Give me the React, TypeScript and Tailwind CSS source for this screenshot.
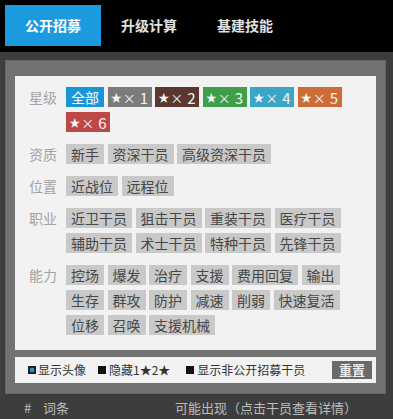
import React from "react";

const font = { fontFamily: '"Noto Sans CJK SC", "Noto Sans", sans-serif' };

const stars = [
  { n: 1, bg: "bg-[#7b7b7b]" },
  { n: 2, bg: "bg-[#5a3830]" },
  { n: 3, bg: "bg-[#3f9e4a]" },
  { n: 4, bg: "bg-[#3aa6c6]" },
  { n: 5, bg: "bg-[#cc6d38]" },
  { n: 6, bg: "bg-[#bd4846]" },
];

const groups = [
  { label: "资质", tags: ["新手", "资深干员", "高级资深干员"] },
  { label: "位置", tags: ["近战位", "远程位"] },
  { label: "职业", tags: ["近卫干员", "狙击干员", "重装干员", "医疗干员", "辅助干员", "术士干员", "特种干员", "先锋干员"] },
  {
    label: "能力",
    tags: ["控场", "爆发", "治疗", "支援", "费用回复", "输出", "生存", "群攻", "防护", "减速", "削弱", "快速复活", "位移", "召唤", "支援机械"],
  },
];

function Tag({ text }: { text: string }) {
  return (
    <div className="h-[20px] px-[5px] bg-[#c9c9c9] text-[#474747] text-[14px] leading-[20px] whitespace-nowrap">
      {text}
    </div>
  );
}

function Row({ label, children }: { label: string; children: React.ReactNode }) {
  return (
    <div className="flex">
      <div className="w-[37px] shrink-0 h-[20px] leading-[20px] text-[14px] text-[#a3a3a3]">{label}</div>
      <div className="flex flex-wrap gap-x-[3.5px] gap-y-[5px] flex-1">{children}</div>
    </div>
  );
}

function Check({ on }: { on?: boolean }) {
  return on ? (
    <span className="inline-block w-[8px] h-[8px] bg-[#3a8fb8] border-[2px] border-[#0d2733] mr-[2px]" />
  ) : (
    <span className="inline-block w-[8px] h-[8px] bg-[#111] mr-[3px]" />
  );
}

export default function App() {
  return (
    <div className="w-[393px] h-[419px] overflow-hidden bg-[#3d3d3d]" style={font}>
      {/* tabs */}
      <div className="h-[52px] bg-black flex pt-[5px] pl-[5px]">
        <div className="w-[96px] h-[41px] bg-[#1b9ae0] text-white text-[14px] font-bold flex items-center justify-center">
          公开招募
        </div>
        <div className="w-[96px] h-[41px] text-[#e2e2e2] text-[14px] font-bold flex items-center justify-center">
          升级计算
        </div>
        <div className="w-[96px] h-[41px] text-[#e2e2e2] text-[14px] font-bold flex items-center justify-center">
          基建技能
        </div>
      </div>

      <div className="pt-[8px] pl-[5px]">
        <div className="w-[381px] bg-[#727272] border border-[#666] pt-[15px] pb-[10px] pl-[9px] pr-[9px]">
          <div className="bg-[#f2f2f2] pt-[11px] pb-[15px] pl-[14px] pr-[8px] flex flex-col gap-[12px]">
            <Row label="星级">
              <div className="h-[20px] px-[5px] bg-[#1b95d8] text-white text-[14px] leading-[20px]">全部</div>
              {stars.map((s) => (
                <div
                  key={s.n}
                  className={`h-[20px] w-[44px] ${s.bg} text-[#f4f4f4] flex items-center justify-center leading-none`}
                >
                  <span className="text-[11px]">★</span>
                  <span className="text-[13px] ml-[1px]">×</span>
                  <span className="text-[15px] ml-[4px]">{s.n}</span>
                </div>
              ))}
            </Row>
            {groups.map((g) => (
              <Row key={g.label} label={g.label}>
                {g.tags.map((t) => (
                  <Tag key={t} text={t} />
                ))}
              </Row>
            ))}
          </div>

          <div className="mt-[7px] h-[26px] bg-[#f2f2f2] flex items-center pl-[13px] pr-[4px] text-[12px] text-[#333]">
            <div className="flex items-center">
              <Check on />
              显示头像
            </div>
            <div className="flex items-center ml-[12px]">
              <Check />
              隐藏1★2★
            </div>
            <div className="flex items-center ml-[16px]">
              <Check />
              显示非公开招募干员
            </div>
            <div className="ml-auto w-[40px] h-[18px] bg-[#6a6a6a] text-[#eee] text-[13px] font-bold flex items-center justify-center">
              重置
            </div>
          </div>
        </div>
      </div>

      <div className="flex items-center h-[28px] text-[13px] text-[#bdbdbd] pl-[24px]">
        <span className="w-[19px]">#</span>
        <span>词条</span>
        <span className="ml-[106px]">可能出现（点击干员查看详情）</span>
      </div>
    </div>
  );
}
